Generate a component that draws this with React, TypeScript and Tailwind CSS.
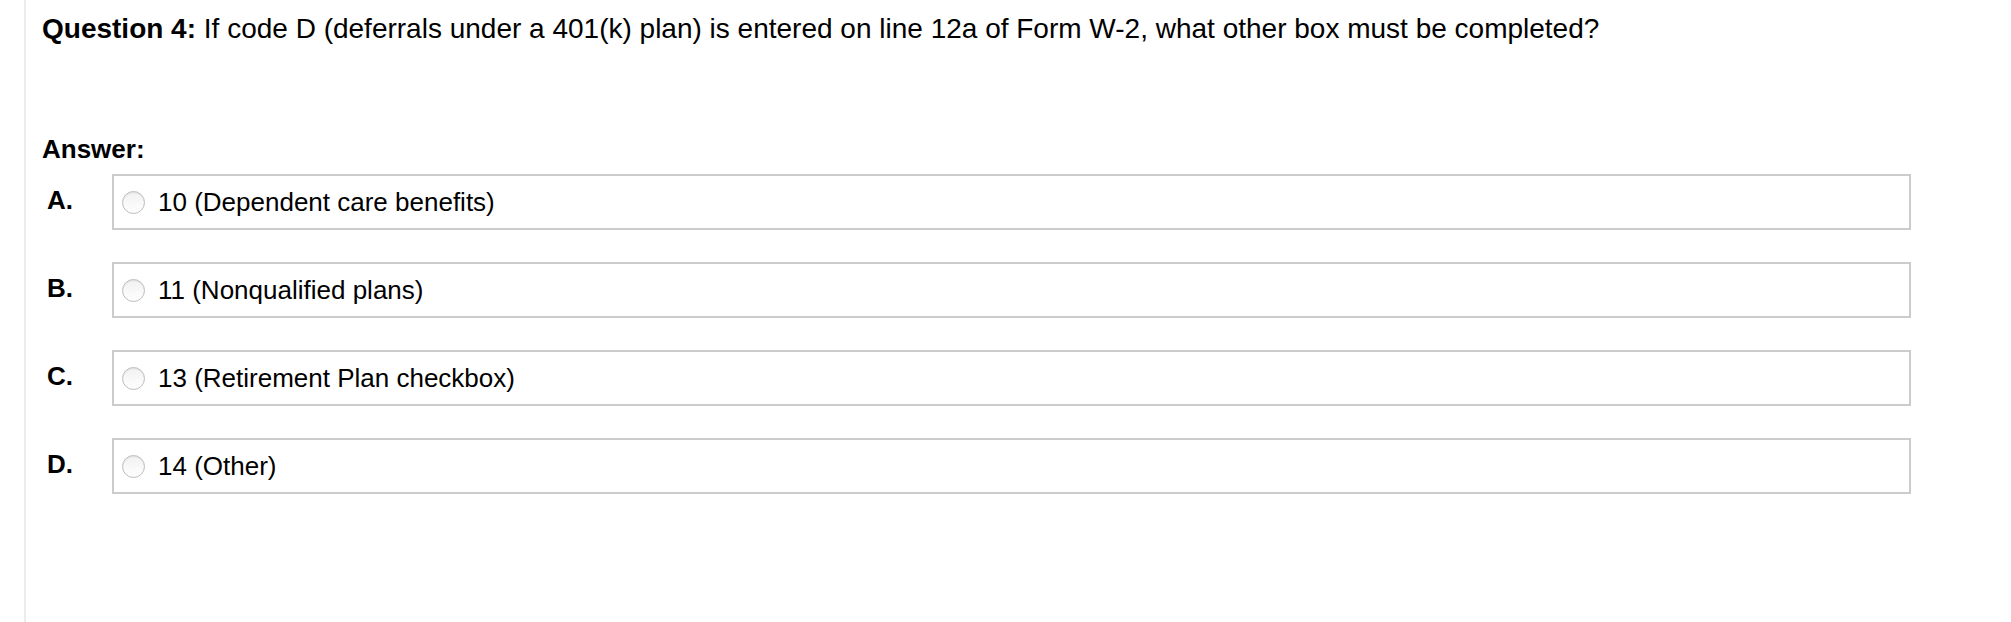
import React from "react";

type Option = {
  letter: string;
  text: string;
};

const options: Option[] = [
  { letter: "A.", text: "10 (Dependent care benefits)" },
  { letter: "B.", text: "11 (Nonqualified plans)" },
  { letter: "C.", text: "13 (Retirement Plan checkbox)" },
  { letter: "D.", text: "14 (Other)" },
];

function Radio() {
  return (
    <span className="inline-block w-[23px] h-[23px] shrink-0 rounded-full border border-[#bdbdbd] bg-linear-to-b from-[#f1f1f1] to-[#ffffff] shadow-[inset_0_1px_1px_rgba(0,0,0,0.07)]" />
  );
}

export default function App() {
  return (
    <div
      className="w-full h-[622px] bg-white text-black overflow-hidden"
      style={{ fontFamily: '"Liberation Sans", Arial, Helvetica, sans-serif' }}
    >
      <div className="ml-[24px] h-full border-l-2 border-[#ececec] pl-[16px] pt-[13px]">
        {/* Question */}
        <p className="text-[28px] leading-[32px]">
          <span className="font-bold">Question 4:</span> If code D (deferrals
          under a 401(k) plan) is entered on line 12a of Form W-2, what other box
          must be completed?
        </p>

        {/* Answer label */}
        <p className="mt-[89px] text-[26px] leading-[30px] font-bold">Answer:</p>

        {/* Options */}
        <div className="mt-[10px] flex flex-col gap-[32px]">
          {options.map((o) => (
            <div key={o.letter} className="flex items-start">
              <div className="w-[70px] pl-[5px] pt-[11px] text-[26px] leading-[30px] font-bold">
                {o.letter}
              </div>
              <label className="w-[1799px] h-[56px] border-2 border-[#cccccc] flex items-center pl-[8px]">
                <Radio />
                <span className="ml-[13px] text-[26px] leading-[30px]">{o.text}</span>
              </label>
            </div>
          ))}
        </div>
      </div>
    </div>
  );
}
